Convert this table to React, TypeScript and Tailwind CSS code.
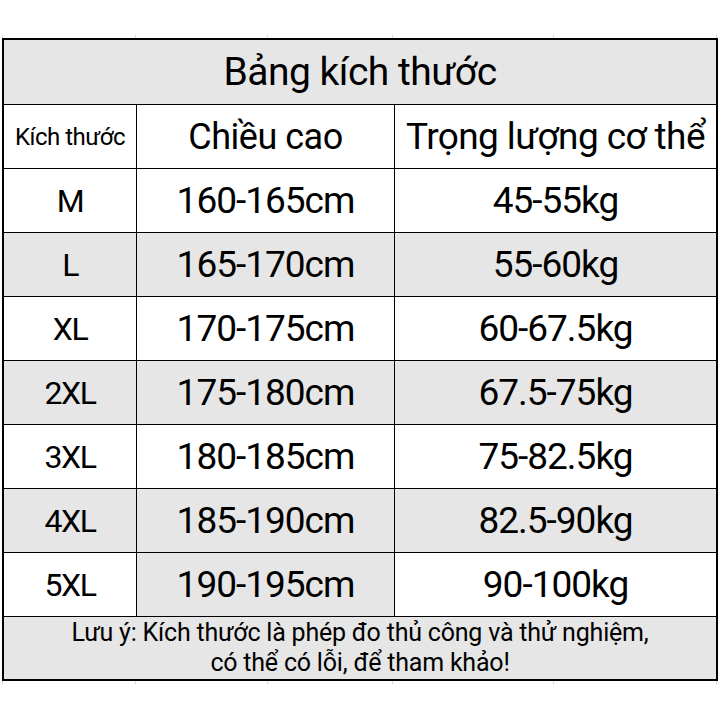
const rows = [
  { size: "M", height: "160-165cm", weight: "45-55kg", gray: false },
  { size: "L", height: "165-170cm", weight: "55-60kg", gray: true },
  { size: "XL", height: "170-175cm", weight: "60-67.5kg", gray: false },
  { size: "2XL", height: "175-180cm", weight: "67.5-75kg", gray: true },
  { size: "3XL", height: "180-185cm", weight: "75-82.5kg", gray: false },
  { size: "4XL", height: "185-190cm", weight: "82.5-90kg", gray: true },
  { size: "5XL", height: "190-195cm", weight: "90-100kg", gray: false },
]

// faint spreadsheet gridline stubs above and below the table
function GridTicks() {
  return (
    <div className="flex h-[3px] pl-[2px]">
      <div className="w-[133px] border-l border-[#dcdcdc]" />
      <div className="w-[132px] border-l border-[#dcdcdc]" />
      <div className="w-[125px] border-l border-[#dcdcdc]" />
      <div className="w-[161px] border-l border-[#dcdcdc]" />
      <div className="w-[164px] border-l border-r border-[#dcdcdc]" />
    </div>
  )
}

export default function App() {
  return (
    <div
      className="h-[719px] w-[719px] overflow-hidden bg-white pt-[35px] text-black"
      style={{ fontFamily: "Roboto, 'Liberation Sans', sans-serif" }}
    >
      <GridTicks />
      <div className="ml-[2px] w-[716px] border-2 border-black">
        <div className="flex h-[65px] items-center justify-center border-b-[1.5px] border-black bg-[#e7e6e6] text-[39px] tracking-[-0.5px]">
          Bảng kích thước
        </div>
        <div className="grid h-[64px] grid-cols-[133px_258px_1fr] border-b-[1.5px] border-black bg-white">
          <div className="flex items-center justify-center border-r-[1.5px] border-black text-[24px] tracking-[-0.5px]">
            Kích thước
          </div>
          <div className="flex items-center justify-center border-r-[1.5px] border-black text-[36px] tracking-[-0.5px]">
            Chiều cao
          </div>
          <div className="flex items-center justify-center text-[37px] tracking-[-0.6px]">
            Trọng lượng cơ thể
          </div>
        </div>
        {rows.map((row, i) => (
          <div
            key={row.size}
            className={`grid h-[64px] grid-cols-[133px_258px_1fr] border-b-[1.5px] border-black ${
              row.gray ? "bg-[#e7e6e6]" : "bg-white"
            }`}
          >
            <div className="flex items-center justify-center border-r-[1.5px] border-black text-[32px] tracking-[-1.5px]">
              {row.size}
            </div>
            <div
              className={`flex items-center justify-center border-r-[1.5px] border-black text-[37px] tracking-[-1px] ${
                i === rows.length - 1 ? "bg-[#e7e6e6]" : ""
              }`}
            >
              {row.height}
            </div>
            <div className="flex items-center justify-center text-[37px] tracking-[-1px]">
              {row.weight}
            </div>
          </div>
        ))}
        <div className="flex h-[62px] flex-col items-center justify-center bg-[#e7e6e6] text-[25px] leading-[30px] tracking-[-0.2px]">
          <p>Lưu ý: Kích thước là phép đo thủ công và thử nghiệm,</p>
          <p>có thể có lỗi, để tham khảo!</p>
        </div>
      </div>
      <GridTicks />
    </div>
  )
}
